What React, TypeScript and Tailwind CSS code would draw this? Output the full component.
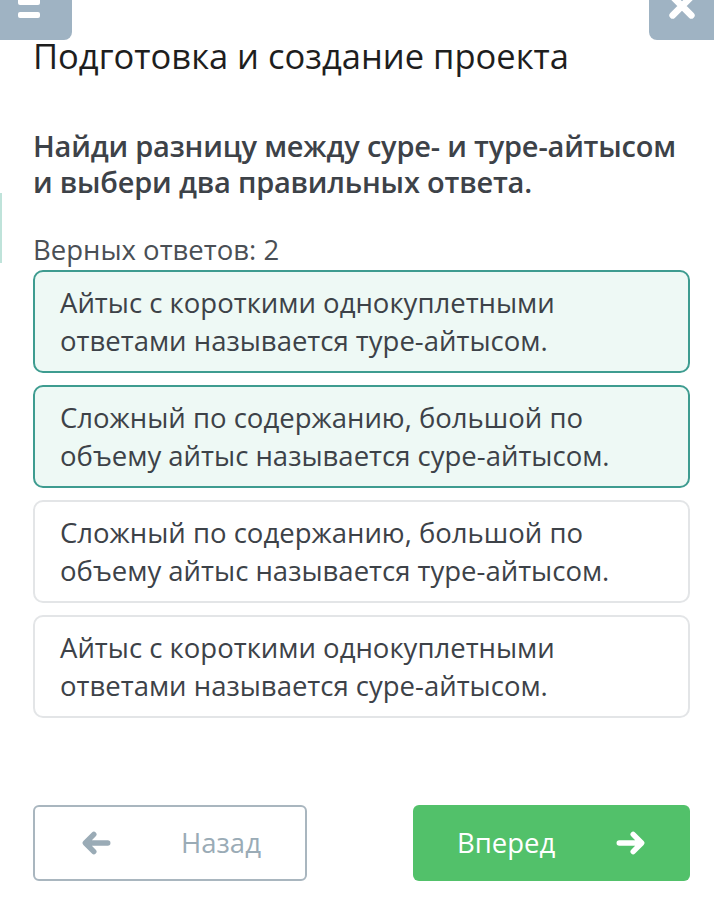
import React from 'react';

type Option = { text: string[]; selected: boolean };

const options: Option[] = [
  { text: ['Айтыс с короткими однокуплетными', 'ответами называется туре-айтысом.'], selected: true },
  { text: ['Сложный по содержанию, большой по', 'объему айтыс называется суре-айтысом.'], selected: true },
  { text: ['Сложный по содержанию, большой по', 'объему айтыс называется туре-айтысом.'], selected: false },
  { text: ['Айтыс с короткими однокуплетными', 'ответами называется суре-айтысом.'], selected: false },
];

const ArrowLeft = ({ className }: { className?: string }) => (
  <svg viewBox="0 0 28 24" className={className} fill="none" stroke="currentColor" strokeWidth="5" strokeLinecap="round" strokeLinejoin="round">
    <path d="M25 12H5M12 4l-8 8 8 8" />
  </svg>
);

const ArrowRight = ({ className }: { className?: string }) => (
  <svg viewBox="0 0 28 24" className={className} fill="none" stroke="currentColor" strokeWidth="5" strokeLinecap="round" strokeLinejoin="round">
    <path d="M3 12h20M16 4l8 8-8 8" />
  </svg>
);

const TopBar = () => {
  return (
    <div className="flex justify-between h-[40px]">
      <div className="w-[72px] h-[40px] bg-[#9fb3c3] rounded-br-[8px] flex flex-col gap-[7px] pl-[18px]">
        <div className="h-[5px] w-[22px] bg-white rounded-b-[2px]" />
        <div className="h-[6px] w-[22px] bg-white rounded-[2px]" />
      </div>
      <div className="w-[65px] h-[40px] bg-[#9fb3c3] rounded-bl-[8px] flex justify-center items-start overflow-hidden">
        <svg viewBox="0 0 24 24" className="w-[32px] h-[32px] -mt-[10px] text-white" fill="none" stroke="currentColor" strokeWidth="5" strokeLinecap="round">
          <path d="M5 5l14 14M19 5L5 19" />
        </svg>
      </div>
    </div>
  );
};

const OptionCard = ({ option }: { option: Option }) => {
  return (
    <div
      className={
        option.selected
          ? 'h-[103px] rounded-[10px] border-2 border-[#3e9c90] bg-[#eef9f5] px-[25px] flex flex-col justify-center'
          : 'h-[103px] rounded-[10px] border-2 border-[#e3e5e7] bg-white px-[25px] flex flex-col justify-center'
      }
    >
      {option.text.map((line) => (
        <div key={line} className="text-[27.5px] leading-[38px] text-[#3d4248] whitespace-nowrap">
          {line}
        </div>
      ))}
    </div>
  );
};

export default function App() {
  return (
    <div className="w-[714px] h-[898px] bg-white overflow-hidden relative font-['Open_Sans',sans-serif]">
      <TopBar />
      <div className="absolute left-0 top-[193px] w-[2px] h-[70px] bg-[#bfe3da]" />
      <div className="px-[33px]">
        <h1 className="text-[34.5px] leading-[40px] text-[#1e1e1e] -mt-[4px] whitespace-nowrap">Подготовка и создание проекта</h1>
        <p className="mt-[52px] text-[29px] leading-[36px] font-semibold text-[#3d4248] whitespace-nowrap tracking-[-0.2px]">
          Найди разницу между суре- и туре-айтысом
          <br />
          и выбери два правильных ответа.
        </p>
        <p className="mt-[33px] text-[27.5px] leading-[34px] text-[#4a4f55]">Верных ответов: 2</p>
        <div className="mt-[3px] flex flex-col gap-[12px] w-[657px]">
          {options.map((o, i) => (
            <OptionCard key={i} option={o} />
          ))}
        </div>
        <div className="mt-[87px] flex justify-between w-[657px]">
          <button className="w-[274px] h-[76px] rounded-[6px] border-2 border-[#a9b6bf] bg-white flex items-center pl-[46px] text-[#9aabb6]">
            <ArrowLeft className="w-[30px] h-[26px]" />
            <span className="ml-[70px] text-[27.5px]">Назад</span>
          </button>
          <button className="w-[277px] h-[76px] rounded-[6px] bg-[#52c16a] flex items-center pl-[44px] pr-[44px] justify-between text-white">
            <span className="text-[27.5px]">Вперед</span>
            <ArrowRight className="w-[30px] h-[26px]" />
          </button>
        </div>
      </div>
    </div>
  );
}
